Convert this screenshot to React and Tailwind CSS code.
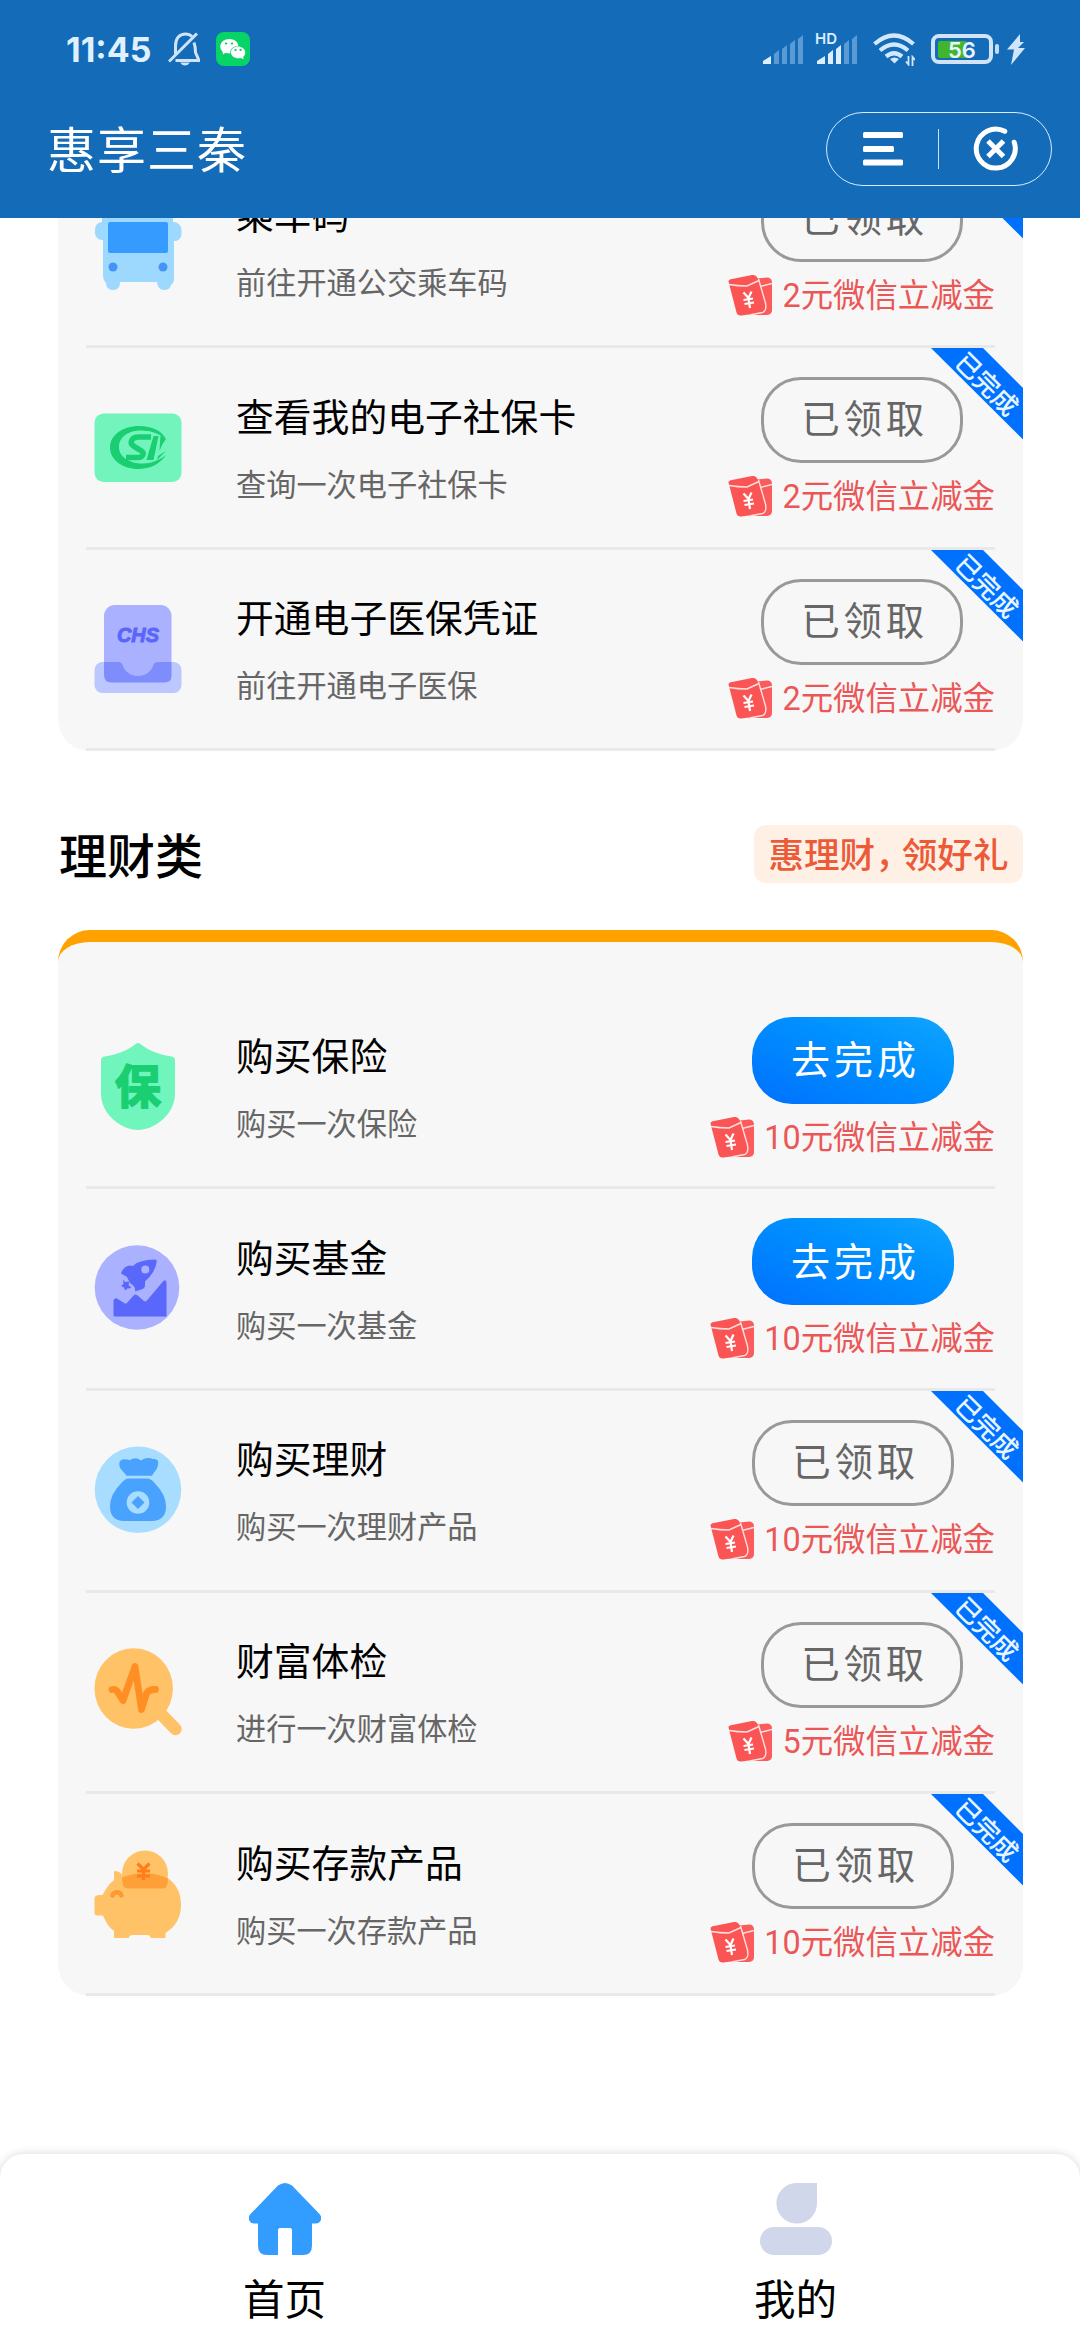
import React from "react";

function BusIcon() {
  return (
    <svg viewBox="94 201 88 88" className="h-[88px] w-[88px]">
      <path d="M102 201h71v20a8 8 0 0 1 8.500 8v4a7 7 0 0 1-7.500 7v38q0 3-2 5l-1 1q-1 5-7 5t-7-8h-37q0 8-7 8t-7-7q-3-3-3-7v-36a7 7 0 0 1-8-7v-4a8 8 0 0 1 7-7z" fill="#9dd8ff" />
      <rect x="108" y="221" width="60" height="31" rx="2" fill="#359bff" />
      <circle cx="113" cy="266" r="4.500" fill="#4494f5" />
      <circle cx="163" cy="266" r="4.500" fill="#4494f5" />
    </svg>
  );
}

function SocialCardIcon() {
  return (
    <svg viewBox="94 404 88 88" className="h-[88px] w-[88px]">
      <rect x="94.500" y="413.500" width="87" height="68.500" rx="9" fill="#74f4bd" />
      <path fillRule="evenodd" d="M166 439c-4-8-14-13-27-13-16 0-29 9-29 21.500s13 21.500 28 21.500c12 0 22-5 28-14-7 5.500-15 8.500-23 8.500-13 0-24-6-24-16.500s10-16.500 22-16.500c10 0 18 3 25 8.500z" fill="#19cf72" />
      <path d="M151 437h-12c-8 0-10.500 6.500-4 10l6 3.500c4 2.500 2 7-3 7h-12" fill="none" stroke="#19cf72" strokeWidth="5.500" />
      <path d="M153.500 436h5l-5 24h-7z" fill="#19cf72" />
      <path d="M160.500 435l5.500 4-3.500 5-3 7zM166 451l-9 9 1-4z" fill="#19cf72" />
    </svg>
  );
}

function ChsIcon() {
  return (
    <svg viewBox="94 605 88 88" className="h-[88px] w-[88px]">
      <rect x="104" y="605" width="67.500" height="77.500" rx="11" fill="#aab1ff" />
      <path d="M102 662h14q4 0 6 4c2 6 8 10 16 10s14-4 16-10q2-4 6-4h14a8 8 0 0 1 7.500 8v15a8 8 0 0 1-8 8h-71a8 8 0 0 1-8-8v-15a8 8 0 0 1 7.500-8z" fill="#bcc6ff" />
      <path d="M104 662h14q4 0 5 4c2 6 8 10 15 10s13-4 15-10q1-4 5-4h13.500v14q0 6.500-7 6.500h-53q-7.500 0-7.500-8z" fill="#7f8cfb" />
      <text x="138" y="641.500" textAnchor="middle" textLength="42" lengthAdjust="spacingAndGlyphs" fontFamily="Liberation Sans" fontWeight="700" fontStyle="italic" fontSize="20" fill="#5a66fb" stroke="#5a66fb" strokeWidth="1">CHS</text>
    </svg>
  );
}

function ShieldIcon() {
  return (
    <svg viewBox="94 1043.500 88 88" className="h-[88px] w-[88px]">
      <path d="M138 1043.500q2 0 3.500 2 12 9 30 11.500 3.500.500 3.500 4v33c0 22-22 36.500-37 36.500s-37-14.500-37-36.500v-33q0-3.500 3.500-4 18-2.500 30-11.500 1.500-2 3.500-2z" fill="#70f5bd" />
      <text x="138" y="1103" textAnchor="middle" fontFamily="Noto Sans CJK SC, sans-serif" fontWeight="700" fontSize="46" fill="#19cf72" stroke="#19cf72" strokeWidth="1.800" strokeLinejoin="round">保</text>
    </svg>
  );
}

function RocketIcon() {
  return (
    <svg viewBox="94 1244.500 88 88" className="h-[88px] w-[88px]">
      <circle cx="137" cy="1287" r="42.300" fill="#aab1ff" />
      <path d="M114 1315.500v-16q1-2 3-1l8 5q1 .5 2-.5l7-8q1.500-1 3 0l7 6q1.500 1 3-.5l16-19q3-3 3 1v33z" fill="#5a67fb" stroke="#5a67fb" strokeWidth="1" strokeLinejoin="round" />
      <path d="M155 1259q2 0 1.700 2-.7 6-4 11-3 5-7.700 9v4q0 3-4 4l-6 2q1-5-4.500-8-2-3-3.500-6.500l-6-3.500q2-7 9-8l3 .5q5-6 22-6.500z" fill="#5a67fb" />
      <circle cx="145.300" cy="1269" r="4" fill="#aab1ff" />
      <path d="M123 1279l2 2.500 4.500-.5-1 3.500 3 3-4 .5-2.500 2-1-3-3-1.500 2.500-2z" fill="#5a67fb" />
    </svg>
  );
}

function MoneyBagIcon() {
  return (
    <svg viewBox="94 1446.500 88 88" className="h-[88px] w-[88px]">
      <circle cx="138" cy="1490.300" r="43.300" fill="#a8ddff" />
      <path d="M127 1475.500l-6-7q-2-4 0-7 3-2 9 0 4-3 8-1.500 3 3 6 0 5-1.500 8 0 5 0 5.500 2.500 0 6-4 10l-2 3z" fill="#4aa2ff" stroke="#4aa2ff" strokeWidth="1.500" strokeLinejoin="round" />
      <path d="M129 1479h18q4 0 8 5 11 11 11 23 0 14-14 14.500h-28q-14-.500-14-14.500 0-12 11-23 4-5 8-5z" fill="#4aa2ff" />
      <circle cx="138" cy="1503" r="11.300" fill="#a8ddff" />
      <path d="M138 1496.500l6.500 6.500-6.500 6.500-6.500-6.500z" fill="#4aa2ff" />
    </svg>
  );
}

function CheckupIcon() {
  return (
    <svg viewBox="94 1648 88 88" className="h-[88px] w-[88px]">
      <path d="M158 1711l17.500 18" stroke="#ffc266" strokeWidth="12.500" strokeLinecap="round" />
      <ellipse cx="133.700" cy="1688.500" rx="39.200" ry="40.300" fill="#ffc266" />
      <path d="M112 1689.500q4-.5 6 3l5 8 12-34 6.500 43 5-16q2-4 8-4h1" fill="none" stroke="#ff8f24" strokeWidth="6.800" strokeLinecap="round" strokeLinejoin="round" />
    </svg>
  );
}

function PiggyIcon() {
  return (
    <svg viewBox="94 1849.500 88 88" className="h-[88px] w-[88px]">
      <circle cx="145" cy="1873" r="23" fill="#ffc266" />
      <path d="M114 1870.500q6 0 8 4 22-8 42 1c12 6 17 16 17 29s-6 22-15.500 28v5h-15q0-3-3-3h-15q-3 0-4 3h-14.500v-7q-7-5-11-15.500h-6q-2.500 0-2.500-3v-14q0-3.500 5-3.500h3q5-10 11.500-15z" fill="#ffc266" />
      <path d="M122 1877q0 11 6 11h35q5 0 5-10-22-10-46-1z" fill="#ff9f37" />
      <path d="M137.500 1863l6 6 6-6M143.500 1869v10.500M137 1870.500h13M137 1875.500h13" fill="none" stroke="#ff7e1c" strokeWidth="3.200" />
      <path d="M112.500 1895a4.800 4.800 0 0 1 9 0" fill="none" stroke="#ff9830" strokeWidth="4.500" strokeLinecap="round" />
    </svg>
  );
}

function CouponIcon() {
  return (
    <svg viewBox="727 476 44 41" className="h-[41px] w-[44px] shrink-0">
      <path d="M752 480l14-1.500q4.500 0 5 4.500v28q0 4.500-5 5h-18z" fill="#fb5b5b" />
      <path d="M757 488l14-3.500" stroke="#fde0de" strokeWidth="1.600" fill="none" />
      <path d="M731 480l20-4q4-.5 5.500 3l9 30q.5 3.500-3 4.500l-22 3q-4 .5-5-3l-8-31q0-2 3.500-2.500z" fill="#fb5454" />
      <path d="M757.500 480l7 24q1.500 8-3 9.500l-13 2.500" stroke="#fde0de" strokeWidth="1.400" fill="none" />
      <path d="M728 485.500q9 1.500 18 1.500l12-5.500" stroke="#fde0de" strokeWidth="1.600" fill="none" />
      <path d="M742.500 493.500l5 5.500 3-6.500M747.500 499l1.500 10M742.500 501l9.500-1.500M743.500 505l9.500-1.500" stroke="#fff" strokeWidth="2.200" fill="none" />
    </svg>
  );
}

function Ribbon() {
  return (
    <div className="absolute top-0 right-0 h-[92px] w-[92px]">
      <svg viewBox="0 0 92 92" className="absolute inset-0 h-full w-full">
        <path d="M0 0h52l40 40v51.500z" fill="#0071ff" />
      </svg>
      <span className="absolute top-[17px] left-[18px] w-[78px] rotate-45 text-center text-[25.500px] leading-[36px] font-medium whitespace-nowrap text-[#e6f5ff]">
        已完成
      </span>
    </div>
  );
}

function TaskRow({ icon: Icon, title, sub, reward, done }) {
  return (
    <div className="relative px-7">
      <div className="flex h-[201.600px] border-b-[3px] border-[#e9e9e9] pl-2">
        <div className="w-[142px] shrink-0 pt-[55.500px]">
          <Icon />
        </div>
        <div className="flex-1 pt-[41.500px]">
          <div className="text-[37.800px] leading-[50px] text-black">{title}</div>
          <div className="mt-[21px] text-[30.200px] leading-[44px] text-[#666]">{sub}</div>
        </div>
        <div className="flex flex-col items-center pt-[29px]">
          {done ? (
            <div className="flex h-[86px] w-[202px] items-center justify-center rounded-[40px] border-[3px] border-[#999] pb-[6px] pl-[6px] text-[38.500px] tracking-[3.800px] text-[#666]">
              已领取
            </div>
          ) : (
            <div className="flex h-[87px] w-[202px] items-center justify-center rounded-[40px] bg-linear-to-tr from-[#0070ff] to-[#12a5ff] pb-[6px] pl-[6px] text-[39px] tracking-[4px] text-white">
              去完成
            </div>
          )}
          <div className="mt-[13px] flex items-center">
            <CouponIcon />
            <span className="ml-[10px] pt-[2px] font-[Roboto,'Noto_Sans_CJK_SC',sans-serif] text-[32.400px] leading-[39px] text-[#eb5757]">
              {reward}元微信立减金
            </span>
          </div>
        </div>
      </div>
      {done && <Ribbon />}
    </div>
  );
}

const lifeTasks = [
  { icon: BusIcon, title: "乘车码", sub: "前往开通公交乘车码", reward: 2, done: true },
  { icon: SocialCardIcon, title: "查看我的电子社保卡", sub: "查询一次电子社保卡", reward: 2, done: true },
  { icon: ChsIcon, title: "开通电子医保凭证", sub: "前往开通电子医保", reward: 2, done: true },
];

const financeTasks = [
  { icon: ShieldIcon, title: "购买保险", sub: "购买一次保险", reward: 10, done: false },
  { icon: RocketIcon, title: "购买基金", sub: "购买一次基金", reward: 10, done: false },
  { icon: MoneyBagIcon, title: "购买理财", sub: "购买一次理财产品", reward: 10, done: true },
  { icon: CheckupIcon, title: "财富体检", sub: "进行一次财富体检", reward: 5, done: true },
  { icon: PiggyIcon, title: "购买存款产品", sub: "购买一次存款产品", reward: 10, done: true },
];

function Signal({ level }) {
  const bars = [
    "M0 30v-3l8-5v8z",
    "M11 30v-10l5-4v14z",
    "M19 30v-15l5-4v19z",
    "M27 30v-20l5-4v24z",
    "M35 30v-25l5-4v29z",
  ];
  return (
    <svg viewBox="0 0 40 30" className="h-[30px] w-[40px]">
      {bars.map((d, i) => (
        <path key={d} d={d} fill={i < level ? "#dceeff" : "#5a9bd6"} />
      ))}
    </svg>
  );
}

function StatusBar() {
  return (
    <div className="flex h-[98px] items-center pl-[66px] pr-[55px]">
      <span className="w-[102px] pt-[2px] font-[Inter] text-[34px] leading-[40px] font-bold text-[#dff0ff]">11:45</span>
      <svg viewBox="168 33 32 34" className="h-[34px] w-[32px]" fill="none" stroke="#cfe4fb" strokeWidth="3">
        <path d="M175.500 55V47c0-8 4-12 10-12 3 0 5 1 6.500 2.500M194 43.500q1.500 4 1.500 10l3.500 8h-23.500" />
        <path d="M169 62.500l28-28" />
        <path d="M180 63.500h10q-2 3-5 3t-5-3z" fill="#cfe4fb" stroke="none" />
      </svg>
      <svg viewBox="216 32 34 34" className="ml-4 h-[34px] w-[34px]">
        <rect x="216" y="32" width="34" height="34" rx="8" fill="#06d467" />
        <path d="M229.500 39c5 0 8.800 3 8.800 7-5 0-8.500 3-8 7.500l-5-.5-2.500 1.500v-2.500c-1.500-1.500-2.500-3.500-2.500-5.500 0-4.500 4-7.500 9.200-7.500z" fill="#fff" />
        <path d="M238 46.500c4 0 7.200 2.500 7.200 6 0 2-1 3.500-2 4.500l.3 2.200-2.500-1.200c-5.500 1.200-10-1.500-10-5.500 0-3.500 3-6 7-6z" fill="#fff" />
        <path d="M226 43.500h.1M232 43.500h.1M235.500 50h.1M240.500 50h.1" stroke="#06c862" strokeWidth="2.200" strokeLinecap="round" />
      </svg>
      <div className="ml-auto flex items-center">
        <Signal level={1} />
        <div className="relative ml-[14px] h-[30px]">
          <Signal level={3} />
          <span className="absolute -top-[3px] -left-[2px] font-[Inter] text-[15px] leading-[16px] font-semibold text-[#dceeff]">HD</span>
        </div>
        <svg viewBox="872 33 42 34" className="ml-4 h-[34px] w-[42px]" fill="none" stroke="#d4e8fc" strokeWidth="4.200">
          <path d="M873.500 45q19.500-17 39 0M879 51.500q14-12 28 0M885 57.500q8-6.500 16 0" />
          <path d="M889 60q4.500-3 9 0l-4.500 4.500z" fill="#d4e8fc" stroke="none" />
          <path d="M907.500 57v8.500l-2.500-3M911.500 67v-9l2.500 3" strokeWidth="1.800" />
        </svg>
        <svg viewBox="930 33 68 32" className="ml-4 h-[32px] w-[68px]">
          <rect x="932" y="36" width="58" height="26" rx="6" fill="none" stroke="#d0e3f8" strokeWidth="4" />
          <path d="M939 41h26v17h-26q-2 0-2-2v-13q0-2 2-2z" fill="#41b62c" />
          <rect x="994" y="44" width="4" height="10" rx="2" fill="#c4dcf5" />
          <text x="961" y="57.500" textAnchor="middle" fontFamily="Inter" fontWeight="600" fontSize="22" fill="#e8f4ff">56</text>
        </svg>
        <svg viewBox="1006 33 18 31" className="ml-2 h-[31px] w-[18px]">
          <path d="M1019 33l-13 15.500h7l-3 15.500 14-17h-7l6-6h-4z" fill="#d0e5fb" />
        </svg>
      </div>
    </div>
  );
}

function Header() {
  return (
    <header className="h-[218px] shrink-0 bg-[#146bb7]">
      <StatusBar />
      <div className="flex items-center justify-between pt-[14px] pr-[28px] pl-[47px]">
        <h1 className="pb-[4px] text-[49px] leading-[60px] tracking-[1px] text-white">惠享三秦</h1>
        <div className="flex h-[74px] w-[226px] items-center rounded-full border border-[#d4edff] pl-[36px]">
          <svg viewBox="863 132 40 34" className="h-[34px] w-[40px]" fill="#fff">
            <rect x="863" y="132" width="40" height="6" rx="1.500" />
            <rect x="863" y="146" width="31" height="6" rx="1.500" />
            <rect x="863" y="159.500" width="40" height="6" rx="1.500" />
          </svg>
          <div className="ml-[35px] h-[40px] w-px bg-[#c9e4fa]" />
          <svg viewBox="973 127 46 46" className="ml-[34px] h-[46px] w-[46px]" fill="none" stroke="#fff" strokeWidth="5" strokeLinecap="round">
            <path d="M1004.800 132.300A19.500 19.500 0 1 0 1014.200 143.200" />
            <path d="M988 142l15.500 15.500M1003.500 142l-15.500 15.500" strokeLinecap="butt" />
          </svg>
        </div>
      </div>
    </header>
  );
}

function BottomNav() {
  return (
    <nav className="relative flex h-[186px] shrink-0 rounded-t-[24px] bg-white px-[29px] shadow-[0_0_10px_rgba(0,0,0,0.16)]">
      <div className="flex flex-1 flex-col items-center pt-[29px]">
        <svg viewBox="249 2183 72 72" className="h-[72px] w-[72px]">
          <path d="M278 2185.500q7-5 14 0l27 28q4 4 1 8-1 2-4 2h-4v22q0 9.500-9 9.500h-11v-25q0-2-2-2h-10q-2 0-2 2v25h-11q-9 0-9-9.500v-22h-4q-3 0-4-2-3-4 1-8z" fill="#339cff" />
        </svg>
        <span className="mt-[17px] text-[41.500px] leading-[50px] text-black">首页</span>
      </div>
      <div className="flex flex-1 flex-col items-center pt-[29px]">
        <svg viewBox="760 2183 72 72" className="h-[72px] w-[72px]" fill="#d0d7eb">
          <path d="M796 2183h21v20a20.300 20.300 0 1 1-21-20z" />
          <rect x="760" y="2227" width="72" height="28" rx="14" />
        </svg>
        <span className="mt-[17px] text-[41.500px] leading-[50px] text-black">我的</span>
      </div>
    </nav>
  );
}

export default function App() {
  return (
    <div className="flex h-[2340px] w-[1080px] flex-col overflow-hidden bg-white font-['Noto_Sans_CJK_SC',sans-serif]">
      <Header />
      <main className="min-h-0 flex-1 overflow-hidden pr-[57px] pl-[58px]">
        <section className="-mt-[71.400px] rounded-b-[32px] bg-[#f7f7f7]">
          {lifeTasks.map((t) => (
            <TaskRow key={t.title} {...t} />
          ))}
        </section>
        <div className="mt-[74px] flex h-[58px] items-center justify-between">
          <h2 className="pb-[2px] pl-px text-[48px] leading-[58px] font-medium text-black">理财类</h2>
          <div className="flex h-[58px] w-[269px] items-center justify-center rounded-[12px] bg-[#fff0e5] pb-[3px] text-[35.600px] font-medium whitespace-nowrap text-[#ec5a38]">
            <span>
              惠理财<span className="tracking-[-9px]">，</span>领好礼
            </span>
          </div>
        </div>
        <section className="mt-[46.600px] rounded-[32px] border-t-[12px] border-[#ffa200] bg-[#f7f7f7] pt-[45.800px]">
          {financeTasks.map((t) => (
            <TaskRow key={t.title} {...t} />
          ))}
        </section>
      </main>
      <BottomNav />
    </div>
  );
}
